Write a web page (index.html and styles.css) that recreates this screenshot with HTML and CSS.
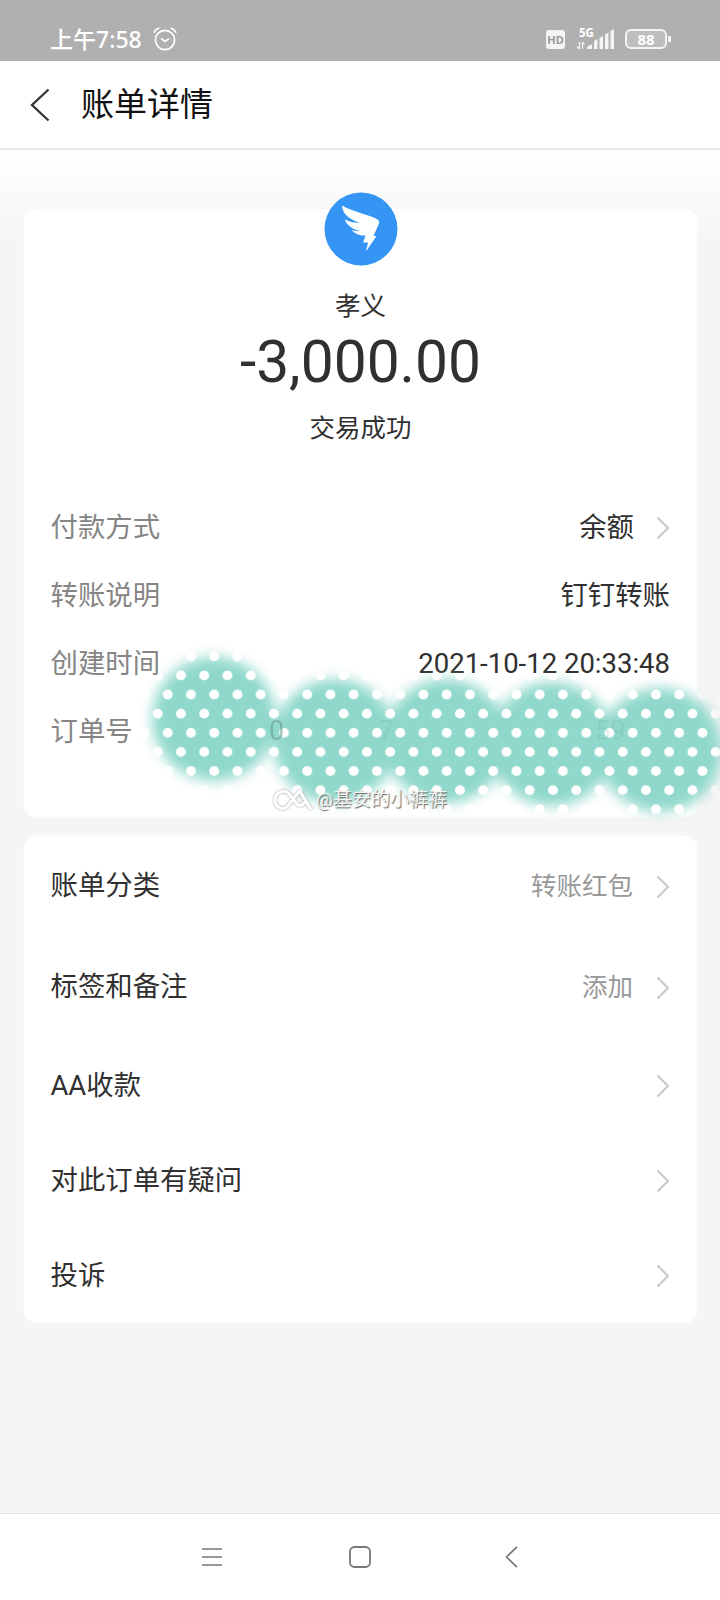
FILE: index.html
```html
<!DOCTYPE html>
<html lang="zh-CN">
<head>
<meta charset="utf-8">
<title>账单详情</title>
<link rel="stylesheet" href="styles.css">
</head>
<body>
<div class="screen">
  <header class="status">
    <span class="clock">上午7:58</span>
    <svg class="alarm" width="24" height="24" viewBox="0 0 24 24" fill="none" stroke="#fff" stroke-width="1.7" stroke-linecap="round"><circle cx="12" cy="13" r="9.6"/><path d="M8.7 12 12 14.4 15.6 12M1.2 5.2Q2.5 2.3 5.6 1.2M18.4 1.2Q21.5 2.3 22.8 5.2"/></svg>
    <span class="hd">HD</span>
    <span class="net">
      <span class="gen">5G</span>
      <svg class="bars" width="39" height="22" viewBox="0 0 39 22" fill="#f4f4f4"><path d="M11 21v-2l5-3v5zM18 21v-8l3.500-2v10zM23.500 21v-11l3.500-2v13zM29 21V6.500l3.500-2v16.500zM34.500 21V3l3.500-2v20z"/><path d="M3.500 14v7M3.500 21l-2.500-2.500M6.500 21v-7M6.500 14l2 2.500" stroke="#f4f4f4" stroke-width="1.200" fill="none"/></svg>
    </span>
    <span class="battery">88</span>
  </header>
  <nav class="titlebar">
    <svg width="22" height="34" viewBox="0 0 22 34" fill="none" stroke="#333" stroke-width="2.300"><path d="M19.500 1.500 3 17 19.500 32.500"/></svg>
    <h1 class="title">账单详情</h1>
  </nav>
  <main class="content">
    <section class="card bill">
      <svg class="avatar" width="74" height="74" viewBox="0 0 74 74"><circle cx="37" cy="37" r="36.500" fill="#3595f4"/><path fill="#fff" d="M18 13.500C29 20 46 23 53.500 27.500Q55.800 29 54.800 32L49.500 44H52.500L42 59.500 44 50.500H39L41.500 43.500Q33 44 27.500 38Q32 39.500 36 39C28 37 22.500 33 20.800 27.500Q28 31 36 31C25 27 18.500 22 18 13.500Z"/></svg>
      <p class="payee">孝义</p>
      <p class="amount">-3,000.00</p>
      <p class="state">交易成功</p>
      <dl class="details">
        <div class="detail"><dt>付款方式</dt><dd>余额<svg class="chev" width="14" height="24" viewBox="0 0 14 24"><path d="M1.500 1.500 12 12 1.500 22.500"/></svg></dd></div>
        <div class="detail"><dt>转账说明</dt><dd>钉钉转账</dd></div>
        <div class="detail"><dt>创建时间</dt><dd class="time">2021-10-12 20:33:48</dd></div>
        <div class="detail"><dt>订单号</dt></div>
      </dl>
    </section>
    <section class="card options">
      <div class="option tall"><span class="label">账单分类</span><span class="value">转账红包</span><svg class="chev" width="14" height="24" viewBox="0 0 14 24"><path d="M1.500 1.500 12 12 1.500 22.500"/></svg></div>
      <div class="option tall"><span class="label">标签和备注</span><span class="value">添加</span><svg class="chev" width="14" height="24" viewBox="0 0 14 24"><path d="M1.500 1.500 12 12 1.500 22.500"/></svg></div>
      <div class="option"><span class="label">AA收款</span><svg class="chev" width="14" height="24" viewBox="0 0 14 24"><path d="M1.500 1.500 12 12 1.500 22.500"/></svg></div>
      <div class="option"><span class="label">对此订单有疑问</span><svg class="chev" width="14" height="24" viewBox="0 0 14 24"><path d="M1.500 1.500 12 12 1.500 22.500"/></svg></div>
      <div class="option"><span class="label">投诉</span><svg class="chev" width="14" height="24" viewBox="0 0 14 24"><path d="M1.500 1.500 12 12 1.500 22.500"/></svg></div>
    </section>
  </main>
  <footer class="keys">
    <svg width="22" height="22" viewBox="0 0 22 22" fill="none" stroke="#777" stroke-width="1.700"><path d="M1 3H21M1 11H21M1 19H21"/></svg>
    <svg width="22" height="22" viewBox="0 0 22 22" fill="none" stroke="#777" stroke-width="1.800"><rect x="1" y="1" width="20" height="20" rx="4.500"/></svg>
    <svg width="22" height="22" viewBox="0 0 22 22" fill="none" stroke="#777" stroke-width="1.700"><path d="M20 .8 9.500 11 20 21.200"/></svg>
  </footer>
  <!-- Dotted brush strokes hiding the order number -->
  <svg class="brush" width="720" height="200" viewBox="0 630 720 200">
    <defs>
      <pattern id="dots" x="157.700" y="656.300" width="23.250" height="38.240" patternUnits="userSpaceOnUse">
        <rect width="23.250" height="38.240" fill="#8fd8cb"/>
        <g fill="#fff"><circle cx="10" cy="0" r="5"/><circle cx="10" cy="38.240" r="5"/><circle cx="0" cy="19.120" r="5"/><circle cx="23.250" cy="19.120" r="5"/></g>
      </pattern>
      <filter id="soft" x="-10%" y="-20%" width="120%" height="140%"><feGaussianBlur stdDeviation="6.500"/></filter>
      <mask id="strokes" maskUnits="userSpaceOnUse" x="0" y="630" width="720" height="200">
        <g fill="#fff" filter="url(#soft)"><circle cx="214" cy="719" r="62"/><circle cx="335" cy="741" r="62"/><circle cx="446" cy="741" r="62"/><circle cx="552" cy="744" r="62"/><circle cx="660" cy="750" r="62"/></g>
      </mask>
    </defs>
    <rect y="630" width="720" height="200" fill="url(#dots)" mask="url(#strokes)"/>
    <g class="ghost"><text x="269" y="740">0</text><text x="379" y="740" opacity=".3">7</text><text x="595" y="740" opacity=".3">59</text></g>
  </svg>
  <div class="watermark">
    <svg width="40" height="24" viewBox="0 0 40 24" fill="none" stroke="#fff" stroke-width="3" stroke-linejoin="round"><path d="M38 21.500 27 3.500C22 7 19 13 15 18 10 23 2 20 2 12S12 0 17 7L24 16Q27.500 20 32 14"/></svg>
    <span>@基安的小裤裤</span>
  </div>
</div>
</body>
</html>
```
FILE: styles.css
```css
* { box-sizing: border-box; }
body { margin: 0; }
h1, p, dl, dd { margin: 0; font-weight: 400; }
svg { flex: none; display: block; }

.screen {
  position: relative;
  width: 720px;
  height: 1600px;
  overflow: hidden;
  display: flex;
  flex-direction: column;
  background: #f5f5f5;
  color: #303030;
  font-family: Roboto, "Noto Sans CJK SC", sans-serif;
  font-size: 27.4px;
}

.status {
  height: 61px;
  padding: 17px 53px 0 50px;
  display: flex;
  align-items: center;
  background: #b0b0b0;
  color: #fff;
}
.clock { font-size: 23px; line-height: 30px; font-weight: 500; font-family: "Noto Sans", "Noto Sans CJK SC", sans-serif; white-space: nowrap; }
.alarm { margin-left: 11px; }
.hd {
  width: 19px;
  height: 19px;
  margin-left: auto;
  border-radius: 3px;
  background: #f4f4f4;
  color: #999;
  font: 700 11px/20px "Noto Sans", sans-serif;
  text-align: center;
}
.net { position: relative; margin-left: 11px; }
.gen { position: absolute; left: 3px; top: -1px; font: 700 11.500px/11px "Noto Sans", sans-serif; }
.battery {
  position: relative;
  width: 42px;
  height: 20px;
  margin-left: 10px;
  border: 2.500px solid #f4f4f4;
  border-radius: 6px;
  background: #bebebe;
  font: 700 15px/16px "Noto Sans", sans-serif;
  text-align: center;
}
.battery::after {
  content: "";
  position: absolute;
  right: -6px;
  top: 5px;
  width: 3px;
  height: 6px;
  background: #f4f4f4;
}

.titlebar {
  height: 89px;
  padding: 0 28px 0 29px;
  display: flex;
  align-items: center;
  gap: 30px;
  background: #fff;
  border-bottom: 2px solid #ebebeb;
}
.title { font-size: 33px; line-height: 48px; color: #111; }

.content {
  flex: 1;
  padding: 59px 23px 0 24px;
  background: linear-gradient(#fff, #f5f5f5 90px);
}
.card { border-radius: 12px; background: #fff; box-shadow: 0 0 5px #fafafa; }
.bill { height: 608px; display: flex; flex-direction: column; align-items: center; }
.avatar { margin-top: -17px; }
.payee { margin-top: 21px; font-size: 25.500px; line-height: 38px; }
.amount { margin-top: 2px; font-size: 58.700px; line-height: 70px; }
.state { margin-top: 12px; font-size: 25.500px; line-height: 38px; }
.details { width: 100%; margin-top: 47px; padding: 0 27px 0 26.500px; }
.detail { height: 68px; display: flex; justify-content: space-between; align-items: center; line-height: 68px; }
.detail dt { color: #858585; }
.detail dd { display: flex; align-items: center; gap: 22px; }
.detail .time { font-size: 27.500px; }
.chev { fill: none; stroke: #c8c8c8; stroke-width: 2; }

.options { height: 486px; margin-top: 19px; padding: 0 27px 0 26.500px; }
.option { height: 95px; display: flex; align-items: center; }
.option.tall { height: 101px; }
.option .chev { margin-left: auto; }
.label { padding-bottom: 5px; }
.tall .label { padding-bottom: 7px; }
.value { margin-left: auto; padding-bottom: 6px; color: #999; font-size: 25.500px; }
.option .value + .chev { margin-left: 23px; }

.keys {
  height: 87px;
  padding: 0 201px;
  display: flex;
  align-items: center;
  justify-content: space-between;
  background: #fff;
  border-top: 1px solid #e4e4e4;
}

.brush { position: absolute; left: 0; top: 630px; }
.ghost { fill: #6a9c94; font-size: 27px; opacity: .6; }
.watermark {
  position: absolute;
  left: 273px;
  top: 788px;
  display: flex;
  align-items: center;
  gap: 3px;
  color: #f4f4f4;
  font-size: 19px;
  line-height: 24px;
  text-shadow: 1px 1px 1px #666;
}
.watermark svg { filter: drop-shadow(0 0 1px #999); }
```
